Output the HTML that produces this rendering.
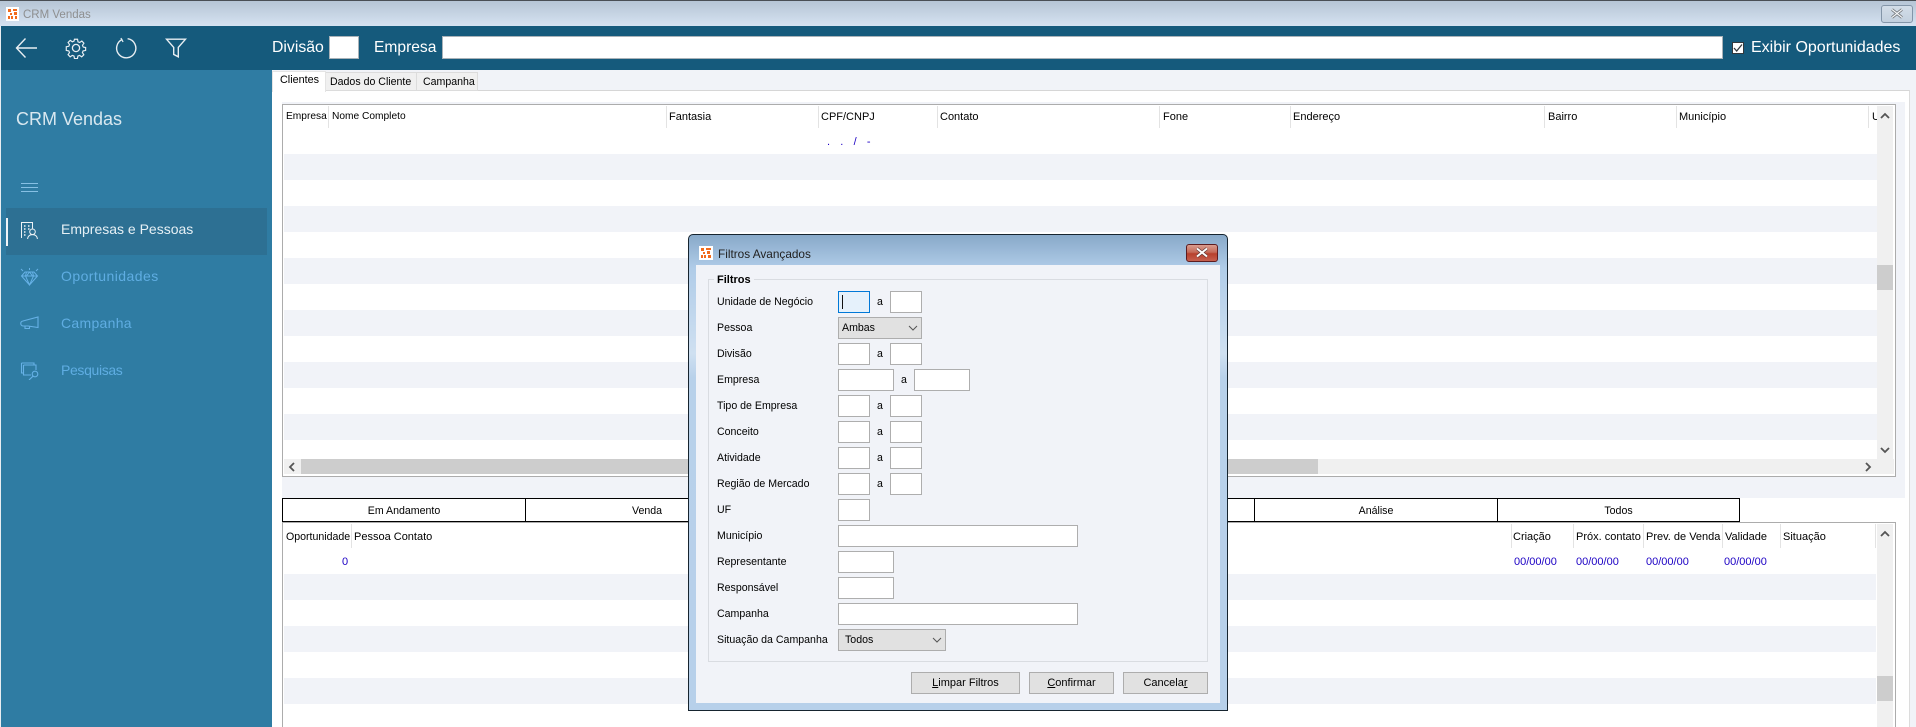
<!DOCTYPE html>
<html lang="pt">
<head>
<meta charset="utf-8">
<title>CRM Vendas</title>
<style>
html,body{margin:0;padding:0;width:1916px;height:727px;overflow:hidden;background:#f1f3f8}
*{box-sizing:border-box}
body{font-family:"Liberation Sans",sans-serif;font-size:11px;color:#000;position:relative}
.a,.t{position:absolute}
.t{white-space:nowrap;line-height:14px;height:14px}
.hd{color:#fff;font-size:15.8px;line-height:20px;height:20px}
.nav{font-size:14px;line-height:18px;height:18px;color:#5fade2;left:61px}
.sep{position:absolute;width:1px;background:#e3e3e3}
.st{position:absolute;height:26px;background:#f1f3f8}
.blue{color:#1c00c4}
.in{position:absolute;height:22px;background:#fff;border:1px solid #aeaeae}
.sel{position:absolute;background:#e1e1e1;border:1px solid #adadad;height:22px;line-height:20px;padding-left:3px;font-size:10.6px}
.btn{position:absolute;top:672px;height:22px;background:#e1e1e1;border:1px solid #adadad;text-align:center;line-height:20px}
.tb{position:absolute;top:498px;height:24px;background:#fff;border:1px solid #000;text-align:center;line-height:24px;border-width:1.5px 1px;font-size:10.6px}
.lb{left:717px;font-size:10.6px}
.as{font-size:10.6px}
u{text-decoration:underline}
</style>
</head>
<body>
<!-- title bar -->
<div class="a" style="left:0;top:0;width:1916px;height:26px;background:linear-gradient(#b6c5d5,#d5e2f1);border-top:1px solid #4a4f55"></div>
<svg class="a" style="left:6px;top:7px" width="13" height="14" viewBox="0 0 13 14"><rect width="13" height="14" fill="#fff"/><path d="M2 2h3v3H2zM7 2h4v2H7zM4 6h2v2H4zM8 5h3v3H8zM2 9h2v3H2zM5 9h2v3H5zM9 9h2v3H9z" fill="#f26a1b"/></svg>
<div class="t" style="left:23px;top:8px;color:#8e8f90;font-size:11.5px">CRM Vendas</div>
<div class="a" style="left:1881px;top:5px;width:32px;height:18px;border:1px solid #8395a8;border-radius:3px;background:linear-gradient(#d3dde8,#c3d0de)"></div>
<svg class="a" style="left:1890px;top:8px" width="14" height="11" viewBox="0 0 14 11"><path d="M2 1.500l10 8M12 1.500l-10 8" stroke="#6f7478" stroke-width="2.800" fill="none"/><path d="M2 1.500l10 8M12 1.500l-10 8" stroke="#f3f5f7" stroke-width="1.200" fill="none"/></svg>

<!-- header -->
<div class="a" style="left:1px;top:26px;width:1915px;height:44px;background:#155a7c"></div>
<svg class="a" style="left:14px;top:36px" width="24" height="24" viewBox="0 0 24 24" fill="none" stroke="#e8eef2" stroke-width="1.400"><path d="M23 12H3M11.500 2.500L2.500 12l9 9.500"/></svg>
<svg class="a" style="left:65px;top:37px" width="22" height="22" viewBox="0 0 22 22" fill="none" stroke="#e8eef2" stroke-width="1.300"><circle cx="11" cy="11" r="3.600"/><path d="M9.300 1.300h3.400l.5 2.800 1.900.8 2.400-1.600 2.300 2.400-1.600 2.300.8 2-.1 0 2.800.5v3.200l-2.800.5-.8 1.900 1.600 2.400-2.400 2.300-2.300-1.600-1.900.8-.5 2.800H9.300l-.5-2.800-1.900-.8-2.400 1.600-2.300-2.400 1.600-2.300-.8-1.900-2.800-.5V9.600l2.800-.5.8-1.900-1.600-2.400 2.400-2.300 2.300 1.600 1.900-.8z" transform="translate(1.100 1.100) scale(.9)"/></svg>
<svg class="a" style="left:115px;top:37px" width="22" height="22" viewBox="0 0 22 22" fill="none" stroke="#e8eef2" stroke-width="1.400"><path d="M7.400 2.400a9.600 9.600 0 1 0 5.200-.7"/><path d="M7 .8v4.400" stroke-width="1.200" transform="rotate(-30 7 3)"/></svg>
<svg class="a" style="left:165px;top:38px" width="22" height="20" viewBox="0 0 22 20" fill="none" stroke="#e8eef2" stroke-width="1.400"><path d="M1.500 1.200h19l-7.200 8.200v9.400l-4.600-2.400V9.400z"/></svg>
<div class="t hd" style="left:272px;top:38px">Divisão</div>
<div class="a" style="left:329px;top:36px;width:30px;height:23px;background:#fff;border:1px solid #a9b2b8"></div>
<div class="t hd" style="left:374px;top:38px;font-size:15.6px">Empresa</div>
<div class="a" style="left:442px;top:36px;width:1281px;height:23px;background:#fff;border:1px solid #a9b2b8"></div>
<div class="a" style="left:1732px;top:42px;width:12px;height:12px;background:#fff;border:1px solid #33393d"></div>
<svg class="a" style="left:1733px;top:43px" width="10" height="10" viewBox="0 0 10 10" fill="none" stroke="#33393d" stroke-width="1.300"><path d="M1 5l2.700 3L9 1.500"/></svg>
<div class="t hd" style="left:1751px;top:38px;font-size:16px">Exibir Oportunidades</div>

<!-- sidebar -->
<div class="a" style="left:0;top:26px;width:1px;height:701px;background:#e8edf1"></div>
<div class="a" style="left:1px;top:70px;width:271px;height:657px;background:#2f7ca3"></div>
<div class="t" style="left:16px;top:108px;font-size:18px;line-height:22px;height:22px;color:#d9e8f0">CRM Vendas</div>
<div class="a" style="left:21px;top:183px;width:17px;height:1px;background:#86c0e4"></div>
<div class="a" style="left:21px;top:187px;width:17px;height:1px;background:#86c0e4"></div>
<div class="a" style="left:21px;top:191px;width:17px;height:1px;background:#86c0e4"></div>
<div class="a" style="left:6px;top:208px;width:261px;height:47px;background:#2d7093"></div>
<div class="a" style="left:6px;top:218px;width:2px;height:28px;background:#f0f4f7"></div>
<svg class="a" style="left:20px;top:221px" width="19" height="19" viewBox="0 0 19 19" fill="none" stroke="#eef3f6" stroke-width="1"><path d="M1.500 17V1.500h11v6"/><path d="M4 5h1.500M8 5h1.500M4 8h1.500M8 8h1.500M4 11h1.500M4 14h1.500" stroke-width="1.600"/><circle cx="12.500" cy="10.800" r="2.800"/><path d="M7.600 18c.3-3 2.200-4.400 4.900-4.400s4.600 1.400 4.900 4.400"/></svg>
<div class="t nav" style="top:220px;color:#e6f0f5">Empresas e Pessoas</div>
<svg class="a" style="left:20px;top:268px" width="19" height="18" viewBox="0 0 19 18" fill="none" stroke="#66b1e6" stroke-width="1"><path d="M5 4h9l3.500 4-8 9-8-9zM1.500 8h16M6.500 4l-1 4 4 9 4-9-1-4M9.500 4l-3 4M9.500 4l3 4"/><path d="M1 1l2 2M18 1l-2 2M9.500 0v2"/></svg>
<div class="t nav" style="top:267px;letter-spacing:.45px">Oportunidades</div>
<svg class="a" style="left:20px;top:315px" width="19" height="16" viewBox="0 0 19 16" fill="none" stroke="#66b1e6" stroke-width="1.100"><path d="M18 2v10.500L8 11H3c-3-.5-3-4.500 0-5zM5 11v2.500h4.500V11"/></svg>
<div class="t nav" style="top:314px;letter-spacing:.3px">Campanha</div>
<svg class="a" style="left:20px;top:362px" width="19" height="18" viewBox="0 0 19 18" fill="none" stroke="#66b1e6" stroke-width="1.100"><path d="M1.500 1h12.500v2M1.500 1v10h2M3.500 3H16v5M3.500 3v10H11"/><circle cx="15" cy="12" r="2.800"/><path d="M13 14.200L9 18"/></svg>
<div class="t nav" style="top:361px;letter-spacing:-.35px">Pesquisas</div>

<!-- tabs / panel -->
<div class="a" style="left:272px;top:90px;width:1638px;height:637px;background:#fff;border-top:1px solid #d6d6d6;border-right:1px solid #dcdcdc"></div>
<div class="a" style="left:272px;top:71px;width:54px;height:21px;background:#fff;border:1px solid #e4e4e4;border-bottom:0"></div>
<div class="t" style="left:280px;top:73px;font-size:10.8px">Clientes</div>
<div class="a" style="left:326px;top:72px;width:91px;height:19px;background:#f0f0f0;border:1px solid #dcdcdc;border-left:0"></div>
<div class="t" style="left:330px;top:75px;font-size:10.6px">Dados do Cliente</div>
<div class="a" style="left:417px;top:72px;width:61px;height:19px;background:#f0f0f0;border:1px solid #dcdcdc;border-left:0"></div>
<div class="t" style="left:423px;top:75px;font-size:10.6px">Campanha</div>

<!-- grid 1 -->
<div class="a" style="left:282px;top:102px;width:1623px;height:396px;background:#f1f3f8"></div>
<div class="a" style="left:282px;top:104px;width:1614px;height:373px;background:#fff;border:1px solid #acacac"></div>
<div class="st" style="left:284px;top:154px;width:1593px"></div>
<div class="st" style="left:284px;top:206px;width:1593px"></div>
<div class="st" style="left:284px;top:258px;width:1593px"></div>
<div class="st" style="left:284px;top:310px;width:1593px"></div>
<div class="st" style="left:284px;top:362px;width:1593px"></div>
<div class="st" style="left:284px;top:414px;width:1593px"></div>
<div class="sep" style="left:328px;top:106px;height:22px"></div>
<div class="sep" style="left:666px;top:106px;height:22px"></div>
<div class="sep" style="left:818px;top:106px;height:22px"></div>
<div class="sep" style="left:937px;top:106px;height:22px"></div>
<div class="sep" style="left:1159px;top:106px;height:22px"></div>
<div class="sep" style="left:1290px;top:106px;height:22px"></div>
<div class="sep" style="left:1544px;top:106px;height:22px"></div>
<div class="sep" style="left:1676px;top:106px;height:22px"></div>
<div class="sep" style="left:1868px;top:106px;height:22px"></div>
<div class="t" style="left:286px;top:110px;font-size:10.2px">Empresa</div>
<div class="t" style="left:332px;top:110px;font-size:10.2px">Nome Completo</div>
<div class="t" style="left:669px;top:110px">Fantasia</div>
<div class="t" style="left:821px;top:110px">CPF/CNPJ</div>
<div class="t" style="left:940px;top:110px">Contato</div>
<div class="t" style="left:1163px;top:110px">Fone</div>
<div class="t" style="left:1293px;top:110px">Endereço</div>
<div class="t" style="left:1548px;top:110px">Bairro</div>
<div class="t" style="left:1679px;top:110px">Município</div>
<div class="t" style="left:1872px;top:110px">U</div>
<div class="t blue" style="left:827px;top:135px;letter-spacing:3.600px">. . / -</div>
<div class="a" style="left:1877px;top:106px;width:16px;height:353px;background:#f0f0f0"></div>
<div class="a" style="left:1877px;top:265px;width:16px;height:25px;background:#cdcdcd"></div>
<svg class="a" style="left:1880px;top:112px" width="10" height="8" viewBox="0 0 10 8" fill="none" stroke="#555" stroke-width="1.800"><path d="M1 6l4-4 4 4"/></svg>
<svg class="a" style="left:1880px;top:446px" width="10" height="8" viewBox="0 0 10 8" fill="none" stroke="#555" stroke-width="1.800"><path d="M1 2l4 4 4-4"/></svg>
<div class="a" style="left:284px;top:459px;width:1610px;height:15px;background:#f0f0f0"></div>
<div class="a" style="left:301px;top:459px;width:1017px;height:15px;background:#cdcdcd"></div>
<svg class="a" style="left:288px;top:462px" width="8" height="10" viewBox="0 0 8 10" fill="none" stroke="#555" stroke-width="1.800"><path d="M6 1L2 5l4 4"/></svg>
<svg class="a" style="left:1864px;top:462px" width="8" height="10" viewBox="0 0 8 10" fill="none" stroke="#555" stroke-width="1.800"><path d="M2 1l4 4-4 4"/></svg>

<!-- state tabs -->
<div class="a" style="left:272px;top:498px;width:1631px;height:229px;background:#fff"></div>
<div class="tb" style="left:282px;width:244px">Em Andamento</div>
<div class="tb" style="left:525px;width:244px">Venda</div>
<div class="tb" style="left:768px;width:244px"></div>
<div class="tb" style="left:1011px;width:244px"></div>
<div class="tb" style="left:1254px;width:244px">Análise</div>
<div class="tb" style="left:1497px;width:243px">Todos</div>

<!-- grid 2 -->
<div class="a" style="left:282px;top:522px;width:1614px;height:206px;background:#fff;border:1px solid #acacac"></div>
<div class="st" style="left:284px;top:574px;width:1592px"></div>
<div class="st" style="left:284px;top:626px;width:1592px"></div>
<div class="st" style="left:284px;top:678px;width:1592px"></div>
<div class="sep" style="left:351px;top:524px;height:24px"></div>
<div class="sep" style="left:1511px;top:524px;height:24px"></div>
<div class="sep" style="left:1573px;top:524px;height:24px"></div>
<div class="sep" style="left:1643px;top:524px;height:24px"></div>
<div class="sep" style="left:1722px;top:524px;height:24px"></div>
<div class="sep" style="left:1780px;top:524px;height:24px"></div>
<div class="sep" style="left:1875px;top:524px;height:24px"></div>
<div class="t" style="left:286px;top:530px;font-size:10.6px">Oportunidade</div>
<div class="t" style="left:354px;top:530px">Pessoa Contato</div>
<div class="t" style="left:1513px;top:530px">Criação</div>
<div class="t" style="left:1576px;top:530px">Próx. contato</div>
<div class="t" style="left:1646px;top:530px">Prev. de Venda</div>
<div class="t" style="left:1725px;top:530px">Validade</div>
<div class="t" style="left:1783px;top:530px">Situação</div>
<div class="t blue" style="left:342px;top:555px">0</div>
<div class="t blue" style="left:1514px;top:555px">00/00/00</div>
<div class="t blue" style="left:1576px;top:555px">00/00/00</div>
<div class="t blue" style="left:1646px;top:555px">00/00/00</div>
<div class="t blue" style="left:1724px;top:555px">00/00/00</div>
<div class="a" style="left:1877px;top:524px;width:16px;height:203px;background:#f0f0f0"></div>
<div class="a" style="left:1877px;top:676px;width:16px;height:25px;background:#cdcdcd"></div>
<svg class="a" style="left:1880px;top:530px" width="10" height="8" viewBox="0 0 10 8" fill="none" stroke="#555" stroke-width="1.800"><path d="M1 6l4-4 4 4"/></svg>

<!-- dialog -->
<div class="a" style="left:688px;top:234px;width:540px;height:477px;border:1px solid #16242f;border-radius:5px 5px 0 0;background:linear-gradient(#88a9c9 0,#b0cce8 7%,#cfe0f1 25%,#b8d1ea 30%,#b7d0ea 100%)"></div>
<div class="a" style="left:696px;top:265px;width:524px;height:438px;background:#f1f3f8"></div>
<svg class="a" style="left:699px;top:246px" width="14" height="14" viewBox="0 0 14 14"><rect width="14" height="14" fill="#fff"/><path d="M2 2h3v3H2zM7 2h5v2H7zM4 6h2v2H4zM8 5h3v3H8zM2 9h2v3H2zM5 9h2v3H5zM9 9h3v3H9z" fill="#f26a1b"/></svg>
<div class="t" style="left:718px;top:247px;color:#222;font-size:11.8px">Filtros Avançados</div>
<div class="a" style="left:1186px;top:244px;width:32px;height:18px;border:1px solid #5d1c1f;border-radius:3px;background:linear-gradient(#d99c8f 0,#c56a58 45%,#b8402c 55%,#c6604f 100%)"></div>
<svg class="a" style="left:1195px;top:247px" width="14" height="11" viewBox="0 0 14 11"><path d="M2 1.500l10 8M12 1.500l-10 8" stroke="#5f3a38" stroke-width="3.200" fill="none"/><path d="M2 1.500l10 8M12 1.500l-10 8" stroke="#fff" stroke-width="1.900" fill="none"/></svg>

<div class="a" style="left:708px;top:279px;width:500px;height:383px;border:1px solid #d9dce1"></div>
<div class="t" style="left:714px;top:273px;background:#f1f3f8;padding:0 3px;font-weight:bold">Filtros</div>

<div class="t lb" style="top:295px">Unidade de Negócio</div>
<div class="in" style="left:838px;top:291px;width:32px;border-color:#0078d7;background:#e5f1fb"></div>
<div class="a" style="left:842px;top:295px;width:1px;height:14px;background:#111"></div>
<div class="t as" style="left:877px;top:295px">a</div>
<div class="in" style="left:890px;top:291px;width:32px"></div>

<div class="t lb" style="top:321px">Pessoa</div>
<div class="sel" style="left:838px;top:317px;width:84px">Ambas</div>
<svg class="a" style="left:908px;top:325px" width="10" height="6" viewBox="0 0 10 6" fill="none" stroke="#555"><path d="M1 1l4 4 4-4"/></svg>

<div class="t lb" style="top:347px">Divisão</div>
<div class="in" style="left:838px;top:343px;width:32px"></div>
<div class="t as" style="left:877px;top:347px">a</div>
<div class="in" style="left:890px;top:343px;width:32px"></div>

<div class="t lb" style="top:373px">Empresa</div>
<div class="in" style="left:838px;top:369px;width:56px"></div>
<div class="t as" style="left:901px;top:373px">a</div>
<div class="in" style="left:914px;top:369px;width:56px"></div>

<div class="t lb" style="top:399px">Tipo de Empresa</div>
<div class="in" style="left:838px;top:395px;width:32px"></div>
<div class="t as" style="left:877px;top:399px">a</div>
<div class="in" style="left:890px;top:395px;width:32px"></div>

<div class="t lb" style="top:425px">Conceito</div>
<div class="in" style="left:838px;top:421px;width:32px"></div>
<div class="t as" style="left:877px;top:425px">a</div>
<div class="in" style="left:890px;top:421px;width:32px"></div>

<div class="t lb" style="top:451px">Atividade</div>
<div class="in" style="left:838px;top:447px;width:32px"></div>
<div class="t as" style="left:877px;top:451px">a</div>
<div class="in" style="left:890px;top:447px;width:32px"></div>

<div class="t lb" style="top:477px">Região de Mercado</div>
<div class="in" style="left:838px;top:473px;width:32px"></div>
<div class="t as" style="left:877px;top:477px">a</div>
<div class="in" style="left:890px;top:473px;width:32px"></div>

<div class="t lb" style="top:503px">UF</div>
<div class="in" style="left:838px;top:499px;width:32px"></div>

<div class="t lb" style="top:529px">Município</div>
<div class="in" style="left:838px;top:525px;width:240px"></div>

<div class="t lb" style="top:555px">Representante</div>
<div class="in" style="left:838px;top:551px;width:56px"></div>

<div class="t lb" style="top:581px">Responsável</div>
<div class="in" style="left:838px;top:577px;width:56px"></div>

<div class="t lb" style="top:607px">Campanha</div>
<div class="in" style="left:838px;top:603px;width:240px"></div>

<div class="t lb" style="top:633px">Situação da Campanha</div>
<div class="sel" style="left:838px;top:629px;width:108px;padding-left:6px">Todos</div>
<svg class="a" style="left:932px;top:637px" width="10" height="6" viewBox="0 0 10 6" fill="none" stroke="#555"><path d="M1 1l4 4 4-4"/></svg>

<div class="btn" style="left:911px;width:109px"><u>L</u>impar Filtros</div>
<div class="btn" style="left:1029px;width:85px"><u>C</u>onfirmar</div>
<div class="btn" style="left:1123px;width:85px">Cancela<u>r</u></div>
</body>
</html>
